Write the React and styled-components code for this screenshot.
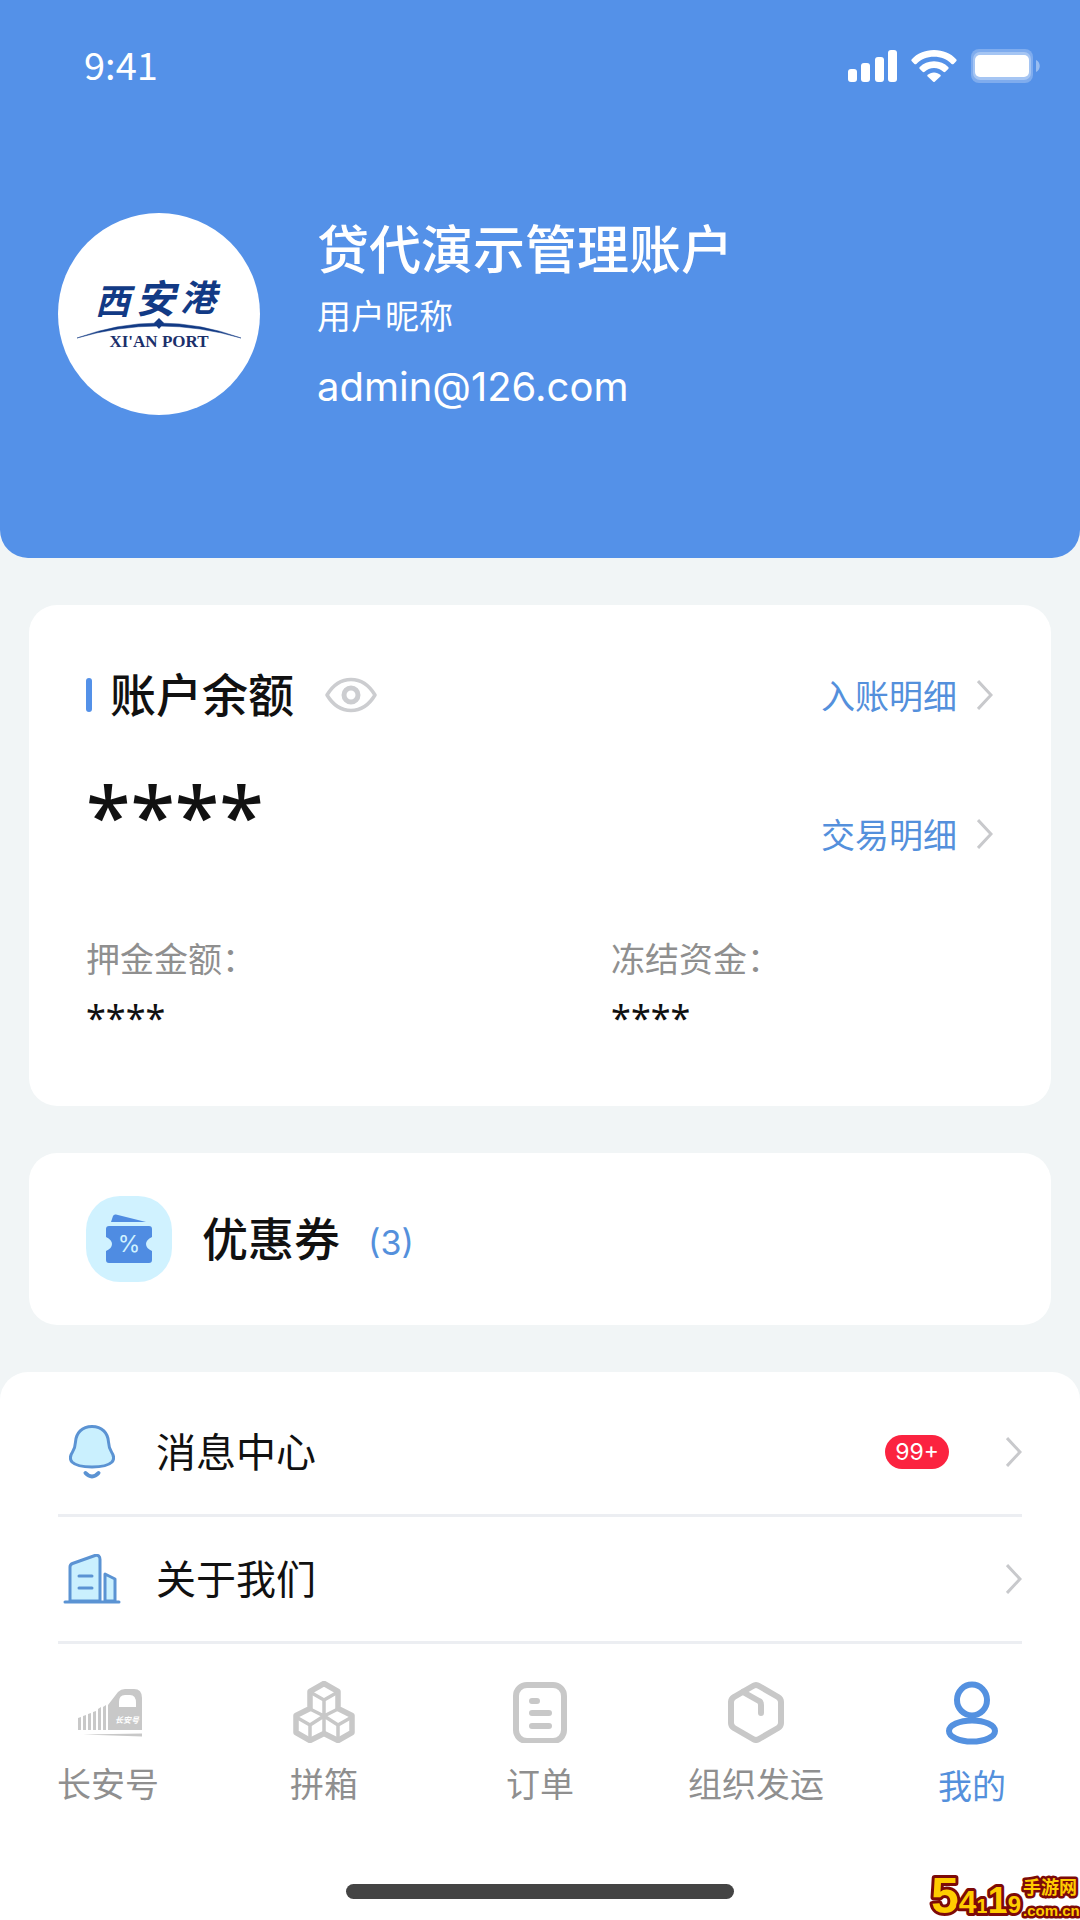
import styled, { createGlobalStyle } from "styled-components";

const GlobalStyle = createGlobalStyle`
  * { box-sizing: border-box; }
  body {
    margin: 0;
    background: #f1f5f6;
    color: #111;
    font-family: "Noto Sans CJK SC", "Noto Sans", sans-serif;
  }
  button { font: inherit; border: 0; background: none; padding: 0; cursor: pointer; }
  a { color: inherit; text-decoration: none; }
  h1, h2, p, dl, dd, ul { margin: 0; padding: 0; }
  svg { display: block; flex: none; }
`;

const Page = styled.div`
  position: relative;
  display: flex;
  flex-direction: column;
  min-height: 100vh;
`;

const Header = styled.header`
  padding: 31px 40px 133px 58px;
  border-radius: 0 0 28px 28px;
  background: #5491e8;
  color: #fff;
`;

const StatusBar = styled.div`
  display: flex;
  align-items: center;
  justify-content: space-between;
  height: 70px;
  padding-left: 26px;
`;

const Time = styled.span`
  padding-bottom: 4px;
  font-size: 38px;
  line-height: 48px;
`;

const StatusIcons = styled.div`
  display: flex;
  align-items: center;
  gap: 14px;
`;

const Profile = styled.div`
  display: flex;
  align-items: flex-start;
  gap: 57px;
  margin-top: 112px;
`;

const UserName = styled.h1`
  font-size: 52px;
  font-weight: 500;
  line-height: 68px;
`;

const UserLine = styled.p`
  font-family: ${(props) => (props.$latin ? "Inter, sans-serif" : "inherit")};
  font-size: ${(props) => (props.$latin ? 40 : 34)}px;
  line-height: ${(props) => (props.$latin ? 76 : 68)}px;
`;

const Card = styled.section`
  margin: 47px 29px 0;
  border-radius: 28px;
  background: #fff;
`;

const Balance = styled(Card)`
  padding: 56px 58px 64px 57px;
`;

const BalanceTop = styled.div`
  display: flex;
  justify-content: space-between;
`;

const TitleRow = styled.div`
  display: flex;
  align-items: center;
  height: 68px;
`;

const Mark = styled.span`
  width: 6px;
  height: 34px;
  margin-right: 18px;
  border-radius: 3px;
  background: #5491e8;
`;

const Title = styled.h2`
  padding-bottom: 6px;
  font-size: 46px;
  font-weight: 500;
  line-height: 62px;
`;

const EyeButton = styled.button`
  margin-left: 31px;
`;

const Amount = styled.p`
  margin-top: 38px;
  font-family: "Noto Sans", sans-serif;
  font-size: 81px;
  font-weight: 500;
  line-height: 96px;
`;

const Links = styled.div`
  display: flex;
  flex-direction: column;
  gap: 71px;
`;

const DetailLink = styled.a`
  display: flex;
  align-items: center;
  gap: 20px;
  color: #5490dc;
  font-size: 34px;
  line-height: 68px;
`;

const Funds = styled.dl`
  display: grid;
  grid-template-columns: 11fr 8fr;
  margin-top: 66px;
`;

const FundLabel = styled.dt`
  color: #8f8f8f;
  font-size: 34px;
  line-height: 48px;
`;

const FundValue = styled.dd`
  margin-top: 12px;
  font-family: "Noto Sans", sans-serif;
  font-size: 36px;
  line-height: 48px;
`;

const Coupon = styled(Card)`
  display: flex;
  align-items: center;
  height: 172px;
  padding: 0 57px;
`;

const CouponIcon = styled.span`
  display: grid;
  place-items: center;
  width: 86px;
  height: 86px;
  margin-right: 30px;
  border-radius: 34px;
  background: #d0f2ff;
`;

const Count = styled.span`
  margin-left: 28px;
  padding-top: 8px;
  color: #5490dc;
  font-family: Inter, sans-serif;
  font-size: 34px;
  line-height: 48px;
`;

const Sheet = styled.main`
  flex: 1;
  display: flex;
  flex-direction: column;
  margin-top: 47px;
  padding-top: 18px;
  border-radius: 28px 28px 0 0;
  background: #fff;
`;

const Menu = styled.ul`
  margin: 0 58px;
  list-style: none;
`;

const MenuLink = styled.a`
  display: flex;
  align-items: center;
  height: 127px;
  border-bottom: 3px solid #eceef2;
`;

const MenuIcon = styled.span`
  display: grid;
  justify-items: center;
  width: 68px;
  margin-right: 30px;
`;

const MenuText = styled.span`
  flex: 1;
  padding-bottom: 4px;
  font-size: 40px;
  line-height: 62px;
`;

const Badge = styled.span`
  margin-right: 57px;
  padding: 0 10px;
  border-radius: 17px;
  background: #fb2340;
  color: #fff;
  font-family: Inter, sans-serif;
  font-size: 23px;
  line-height: 34px;
`;

const TabBar = styled.nav`
  display: grid;
  grid-template-columns: repeat(5, 1fr);
  margin-top: auto;
  padding: 37px 0 75px;
`;

const Tab = styled.button`
  display: flex;
  flex-direction: column;
  align-items: center;
  gap: 16px;
  color: ${(props) => (props.$active ? "#5490dc" : "#8f8f8f")};
  font-size: 34px;
  line-height: 48px;
`;

const HomeBar = styled.div`
  align-self: center;
  width: 36%;
  height: 15px;
  margin-bottom: 23px;
  border-radius: 8px;
  background: #444;
`;

const SiteMark = styled.div`
  position: absolute;
  right: 0;
  bottom: 0;
`;

const Chevron = () => (
  <svg width="16" height="30" viewBox="0 0 16 30" fill="none" stroke="#c8c9cc" strokeWidth="3">
    <path d="M1 1l13 14L1 29" />
  </svg>
);

const Signal = () => (
  <svg width="49" height="32" viewBox="0 0 49 32" fill="#fff">
    <rect x="0" y="19" width="9" height="13" rx="3" />
    <rect x="13" y="13" width="9" height="19" rx="3" />
    <rect x="27" y="7" width="9" height="25" rx="3" />
    <rect x="40" y="0" width="9" height="32" rx="3" />
  </svg>
);

const Wifi = () => (
  <svg width="46" height="32" viewBox="0 0 46 32" fill="#fff">
    <path d="M23 0C14 0 6 3.500 0.800 9.200c-.6.700-.6 1.400 0 2l2.600 2.700c.7.600 1.300.6 2 0C10 9.300 16 6.800 23 6.800s13 2.500 17.600 7.100c.7.600 1.300.6 2 0l2.600-2.700c.6-.6.600-1.300 0-2C40 3.500 32 0 23 0z" />
    <path d="M23 11.300c-5.700 0-10.700 2.200-14.200 5.700-.6.700-.6 1.400 0 2l2.800 2.800c.6.600 1.300.6 2 0 2.500-2.400 5.700-3.800 9.400-3.800s6.900 1.400 9.400 3.800c.7.600 1.400.6 2 0l2.800-2.800c.6-.6.600-1.300 0-2-3.500-3.500-8.500-5.700-14.200-5.700z" />
    <path d="M23 22.400c-2.500 0-4.700.9-6.300 2.400-.6.600-.6 1.200 0 1.800l5.300 5c.7.600 1.300.6 2 0l5.300-5c.6-.6.600-1.200 0-1.800-1.600-1.500-3.800-2.400-6.300-2.400z" />
  </svg>
);

const Battery = () => (
  <svg width="69" height="34" viewBox="0 0 69 34">
    <rect x="0" y="0" width="62" height="34" rx="8" fill="#fff" opacity=".25" />
    <rect x="2" y="3" width="58" height="28" rx="7" fill="#fff" opacity=".3" />
    <rect x="4" y="6" width="54" height="22" rx="5" fill="#fff" />
    <path d="M65 11c5 2 5 10 0 12z" fill="#fff" opacity=".4" />
  </svg>
);

const PortLogo = () => (
  <svg width="202" height="202" viewBox="0 0 202 202" role="img" aria-label="西安港">
    <circle cx="101" cy="101" r="101" fill="#fff" />
    <g fill="#123a85" fontFamily="'Noto Sans CJK SC', sans-serif" fontWeight="700" fontStyle="italic">
      <text x="37" y="101" fontSize="35">西</text>
      <text x="78" y="100" fontSize="39">安</text>
      <text x="122" y="98" fontSize="36">港</text>
    </g>
    <path d="M19 125Q101 95 183 125Q101 101 19 125z" fill="#123a85" stroke="#123a85" strokeWidth=".5" />
    <path d="M101 105l5 5-5 6-5-6z" fill="#123a85" />
    <text
      x="101" y="134" textAnchor="middle" fill="#1b2f6b"
      fontFamily="'Liberation Serif', serif" fontWeight="700" fontSize="17"
    >
      XI'AN PORT
    </text>
  </svg>
);

const Eye = () => (
  <svg width="52" height="36" viewBox="0 0 52 36" fill="none" stroke="#cccdd0">
    <path
      d="M2 18C8 8 16 2.500 26 2.500S44 8 50 18C44 28 36 33.500 26 33.500S8 28 2 18z"
      strokeWidth="3.500" strokeLinejoin="round"
    />
    <circle cx="26" cy="18" r="7" strokeWidth="5" />
  </svg>
);

const Ticket = () => (
  <svg width="48" height="50" viewBox="0 0 48 50" fill="#4f8ce2">
    <path d="M6 8L8 2Q9 0 11 .600L41 8z" />
    <path d="M4 12h40q3 0 3 3v8c-4 2-6 4-6 7s2 5 6 7v9q0 3-3 3H4q-3 0-3-3v-9c4-2 6-4 6-7s-2-5-6-7v-8q0-3 3-3z" />
    <text x="24" y="38" textAnchor="middle" fill="#d0f2ff" fontFamily="Inter, sans-serif" fontSize="23">%</text>
  </svg>
);

const Bell = () => (
  <svg width="46" height="54" viewBox="0 0 46 54" stroke="#5b93d3" strokeWidth="3" strokeLinecap="round">
    <path
      d="M23 1.500C13 1.500 7 8 6.500 17c-.3 5-1 7-3 10C1.500 30 .500 34 3 37c4 4 11 5 20 5s16-1 20-5c2.500-3 1.500-7-.5-10-2-3-2.700-5-3-10C39 8 33 1.500 23 1.500z"
      fill="#caf0fe"
    />
    <path d="M16.500 48c4 4.500 9 4.500 13 0" fill="none" strokeWidth="4" />
  </svg>
);

const Building = () => (
  <svg width="58" height="50" viewBox="0 0 58 50" stroke="#5b93d3" strokeWidth="3" strokeLinecap="round" strokeLinejoin="round">
    <path d="M7 47V13q0-2.500 2.500-3.500L32 1.500q5-1 5 4V47z" fill="#caf0fe" />
    <path d="M42 47V20l10 5v22z" fill="#caf0fe" />
    <path d="M2 48h54M16 22h13M16 34h13" fill="none" />
  </svg>
);

const TrainIcon = () => (
  <svg width="70" height="62" viewBox="-4 0 70 62" fill="#c8c8c8">
    <path
      fillRule="evenodd"
      d="M31 49V24L41 11q3-3 7-3h9q8 0 8 9v32zM42 26h17v-4q0-8-6-8h-5q-6 0-6 7z"
    />
    <path d="M1 37l3-1v13H1zM6 35l3-1v15H6zM11 33l3-1v17h-3zM16 31l3-1v19h-3zM21 28l3-2v23h-3zM26 26l3-2v25h-3z" />
    <path d="M6 53.500L65 52.500v3z" />
    <text x="38" y="42" fill="#fff" fontSize="8" fontWeight="700" fontStyle="italic">长安号</text>
  </svg>
);

const BoxesIcon = () => (
  <svg width="62" height="62" viewBox="0 0 62 62" fill="none" stroke="#c8c8c8" strokeLinejoin="round" strokeWidth="3.500">
    <path d="M31 3l14 8v17l14 7v17l-14 8-14-7-14 7-14-8V35l14-7V11z" strokeWidth="5.500" transform="translate(0 -0.500)" />
    <path d="M17 11l14 8 14-8M31 19v16M17 28l14 7 14-7M3 36l14 8 14-9M17 44v15M31 35v17M31 35l14 9 14-8M45 44v15" />
  </svg>
);

const OrderIcon = () => (
  <svg width="62" height="62" viewBox="0 0 62 62" fill="none" stroke="#c8c8c8" strokeWidth="6" strokeLinecap="round">
    <rect x="7" y="4" width="48" height="56" rx="11" />
    <path d="M23 20h5M23 32h17M23 45h17" />
  </svg>
);

const ShipIcon = () => (
  <svg width="62" height="62" viewBox="0 0 62 62" fill="none" stroke="#c8c8c8" strokeWidth="6" strokeLinecap="round" strokeLinejoin="round">
    <path d="M28 5q3-2 6 0l19 11q3 2 3 5v21q0 3-3 5L34 58q-3 2-6 0L9 47q-3-2-3-5V21q0-3 3-5z" />
    <path d="M18 11l16 9q2 1 2 4v8" />
  </svg>
);

const MineIcon = () => (
  <svg width="62" height="64" viewBox="0 0 62 64" fill="none" stroke="#5491e0" strokeWidth="6">
    <ellipse cx="31" cy="19" rx="15" ry="15.500" />
    <ellipse cx="31" cy="50" rx="23" ry="10.500" />
  </svg>
);

const tabs = [
  { label: "长安号", Icon: TrainIcon },
  { label: "拼箱", Icon: BoxesIcon },
  { label: "订单", Icon: OrderIcon },
  { label: "组织发运", Icon: ShipIcon },
  { label: "我的", Icon: MineIcon, active: true },
];

export default function App() {
  return (
    <>
      <GlobalStyle />
      <Page>
        <Header>
          <StatusBar>
            <Time>9:41</Time>
            <StatusIcons>
              <Signal />
              <Wifi />
              <Battery />
            </StatusIcons>
          </StatusBar>
          <Profile>
            <PortLogo />
            <div>
              <UserName>贷代演示管理账户</UserName>
              <UserLine>用户昵称</UserLine>
              <UserLine $latin>admin@126.com</UserLine>
            </div>
          </Profile>
        </Header>

        <Balance>
          <BalanceTop>
            <div>
              <TitleRow>
                <Mark />
                <Title>账户余额</Title>
                <EyeButton aria-label="显示余额">
                  <Eye />
                </EyeButton>
              </TitleRow>
              <Amount>****</Amount>
            </div>
            <Links>
              <DetailLink href="#income">
                入账明细
                <Chevron />
              </DetailLink>
              <DetailLink href="#trade">
                交易明细
                <Chevron />
              </DetailLink>
            </Links>
          </BalanceTop>
          <Funds>
            <div>
              <FundLabel>押金金额：</FundLabel>
              <FundValue>****</FundValue>
            </div>
            <div>
              <FundLabel>冻结资金：</FundLabel>
              <FundValue>****</FundValue>
            </div>
          </Funds>
        </Balance>

        <Coupon>
          <CouponIcon>
            <Ticket />
          </CouponIcon>
          <Title>优惠券</Title>
          <Count>(3)</Count>
        </Coupon>

        <Sheet>
          <Menu>
            <li>
              <MenuLink href="#messages">
                <MenuIcon>
                  <Bell />
                </MenuIcon>
                <MenuText>消息中心</MenuText>
                <Badge>99+</Badge>
                <Chevron />
              </MenuLink>
            </li>
            <li>
              <MenuLink href="#about">
                <MenuIcon>
                  <Building />
                </MenuIcon>
                <MenuText>关于我们</MenuText>
                <Chevron />
              </MenuLink>
            </li>
          </Menu>

          <TabBar>
            {tabs.map(({ label, Icon, active }) => (
              <Tab key={label} $active={active}>
                <Icon />
                {label}
              </Tab>
            ))}
          </TabBar>
          <HomeBar />
        </Sheet>

        <SiteMark>
          <svg
            width="152" height="56" viewBox="0 0 152 56" fill="#ffcc00" stroke="#7d0a08"
            strokeWidth="6" strokeLinejoin="round" paintOrder="stroke"
            fontFamily="'Liberation Sans', sans-serif" fontWeight="700"
          >
            <text x="3" y="47" fontSize="50">
              5<tspan fontSize="32">4</tspan><tspan fontSize="20">1</tspan><tspan fontSize="36">1</tspan><tspan fontSize="24">9</tspan>
            </text>
            <text x="95" y="28" fontSize="18" strokeWidth="5" fontFamily="'Noto Sans CJK SC', sans-serif">手游网</text>
            <text x="95" y="50" fontSize="15" strokeWidth="5">.com.cn</text>
          </svg>
        </SiteMark>
      </Page>
    </>
  );
}
